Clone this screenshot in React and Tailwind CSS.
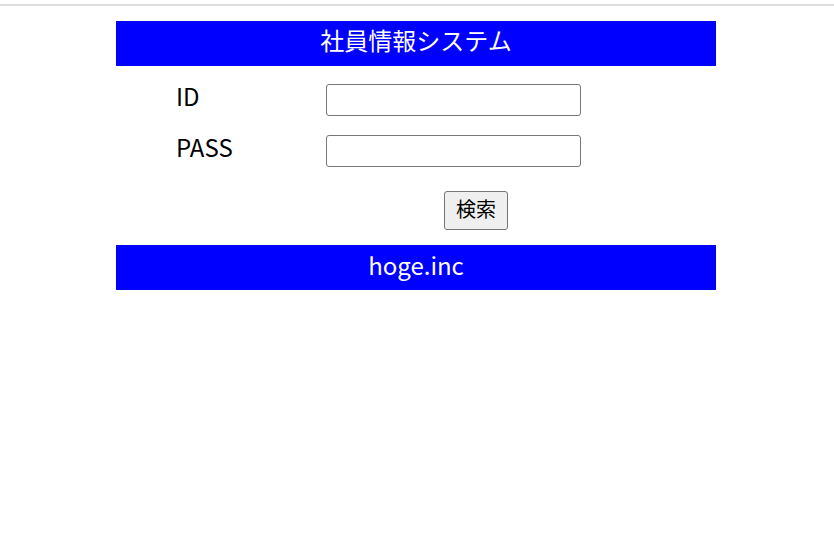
const font = { fontFamily: '"Noto Sans CJK JP", "Noto Sans", sans-serif' };

const Row = ({ label, type }) => (
  <div className="flex items-center h-[32px] pl-[60px]">
    <span className="w-[150px] text-[24px] text-black leading-none mb-[8px]">{label}</span>
    <input
      type={type}
      className="w-[255px] h-[32px] border border-[#767676] rounded-[3px] bg-white px-1"
    />
  </div>
);

export default function App() {
  return (
    <div className="min-h-[550px] bg-white" style={font}>
      <div className="pt-1">
        <div className="h-[2px] bg-[#dddddd]" />
      </div>
      <div className="w-[600px] ml-[116px] mt-[15px]">
        <div className="h-[45px] pb-[7px] bg-[#0000ff] text-white text-[24px] flex items-center justify-center">
          社員情報システム
        </div>
        <form className="pt-[18px]" onSubmit={(e) => e.preventDefault()}>
          <div className="flex flex-col gap-[19px]">
            <Row label="ID" type="text" />
            <Row label="PASS" type="password" />
          </div>
          <div className="mt-[24px] pl-[328px]">
            <button
              type="submit"
              className="w-[64px] h-[39px] pb-[3px] border border-[#767676] rounded-[3px] bg-[#efefef] text-[20px] text-black flex items-center justify-center"
            >
              検索
            </button>
          </div>
        </form>
        <div className="mt-[15px] h-[45px] pb-[6px] bg-[#0000ff] text-white text-[24px] flex items-center justify-center">
          hoge.inc
        </div>
      </div>
    </div>
  );
}
